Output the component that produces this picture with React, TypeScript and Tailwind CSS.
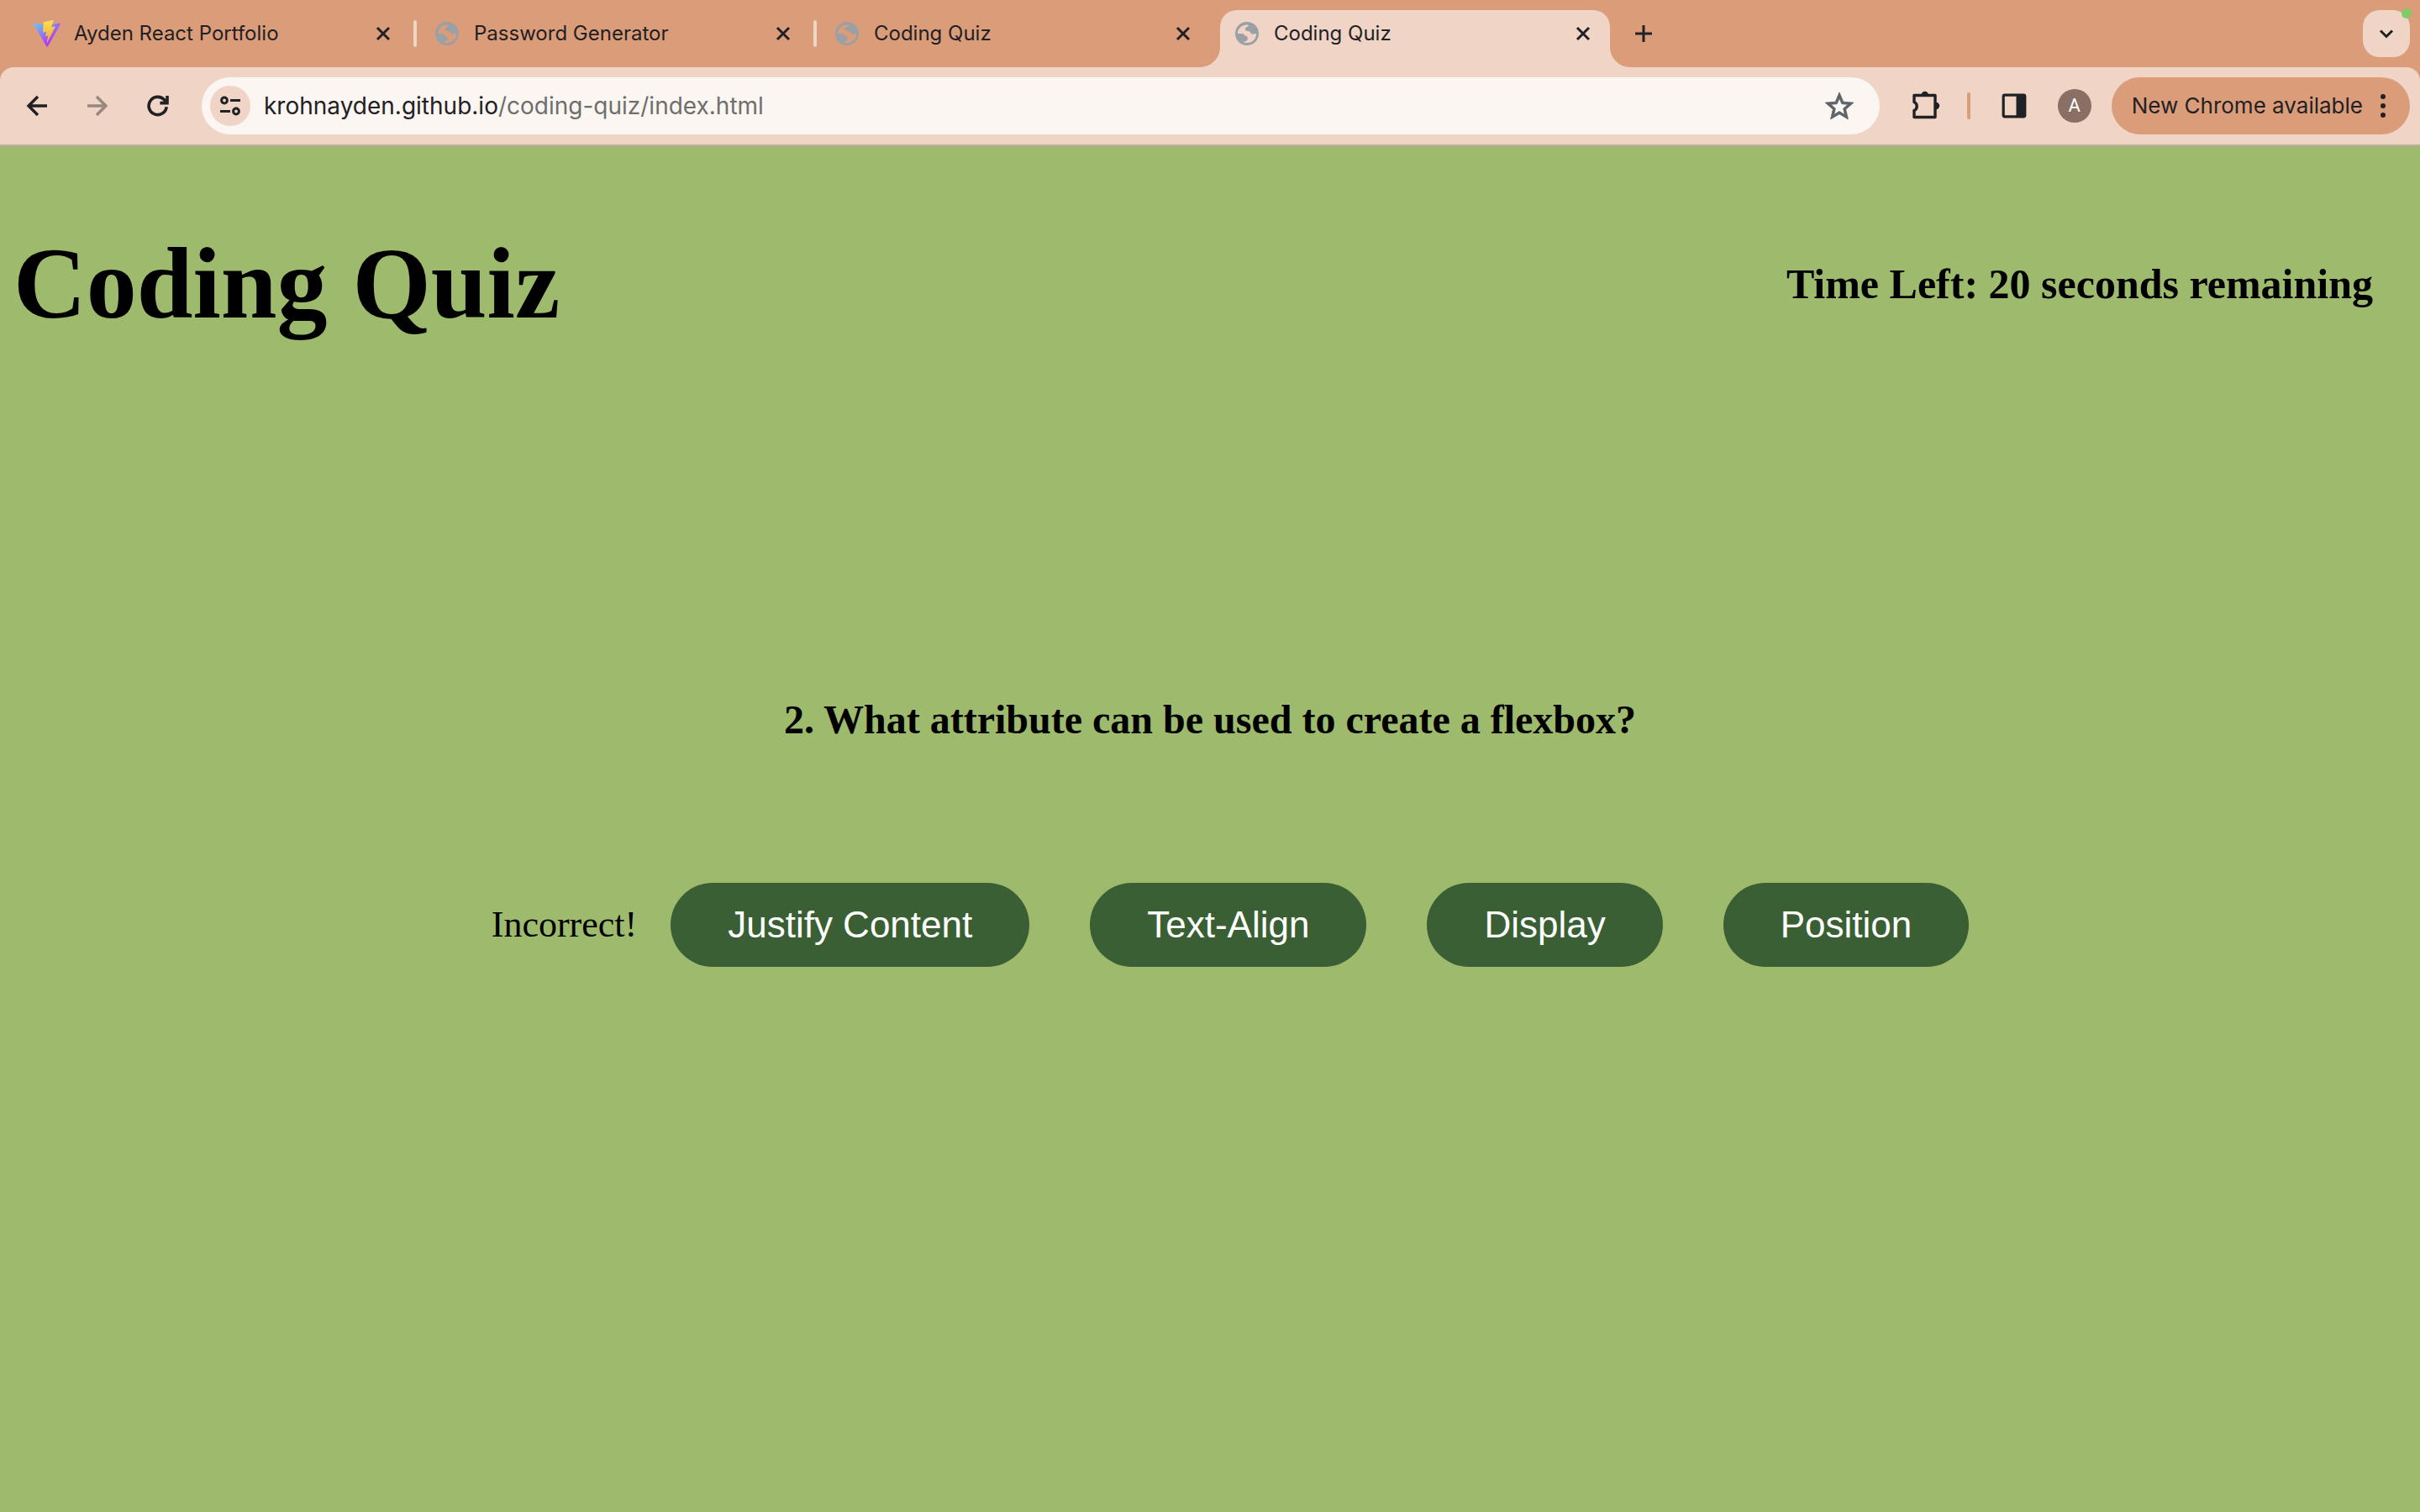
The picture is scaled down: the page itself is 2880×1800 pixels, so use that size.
import React from "react";

const ink = "#1f2124";

function ViteIcon() {
  return (
    <svg viewBox="0 0 256 257" className="size-8 shrink-0" aria-hidden="true">
      <defs>
        <linearGradient id="vite-shield" x1="-.828%" x2="57.636%" y1="7.652%" y2="78.411%">
          <stop offset="0%" stopColor="#5fc8fb" />
          <stop offset="100%" stopColor="#b03cf5" />
        </linearGradient>
        <linearGradient id="vite-bolt" x1="43.376%" x2="50.316%" y1="2.242%" y2="89.03%">
          <stop offset="0%" stopColor="#fbe784" />
          <stop offset="8.333%" stopColor="#f9db4e" />
          <stop offset="100%" stopColor="#f3ac3c" />
        </linearGradient>
      </defs>
      <path
        fill="url(#vite-shield)"
        d="M255.153 37.938L134.897 252.976c-2.483 4.44-8.862 4.466-11.382.048L.875 37.958c-2.746-4.814 1.371-10.646 6.827-9.67l120.385 21.517a6.537 6.537 0 0 0 2.322-.004l117.867-21.483c5.438-.991 9.574 4.796 6.877 9.62Z"
      />
      <path
        fill="url(#vite-bolt)"
        d="M185.432.063L96.44 17.501a3.268 3.268 0 0 0-2.634 3.014l-5.474 92.456a3.268 3.268 0 0 0 3.997 3.378l24.777-5.718c2.318-.535 4.413 1.507 3.936 3.838l-7.361 36.047c-.495 2.426 1.782 4.5 4.151 3.78l15.304-4.649c2.372-.72 4.652 1.36 4.15 3.788l-11.698 56.621c-.732 3.542 3.979 5.473 5.943 2.437l1.313-2.028l72.516-144.72c1.215-2.423-.88-5.186-3.54-4.672l-25.505 4.922c-2.396.462-4.435-1.77-3.759-4.114l16.646-57.705c.677-2.35-1.37-4.583-3.769-4.113Z"
      />
    </svg>
  );
}

function GlobeIcon() {
  return (
    <svg viewBox="0 0 32 32" className="size-8 shrink-0" fill="#9aa0a4" fillRule="evenodd" aria-hidden="true">
      <path d="M16 2a14 14 0 1 0 0 28a14 14 0 0 0 0-28ZM17.5 5.6C18.6 6.6 17.4 7.8 15.8 8.2C14.2 8.6 13.6 9.4 13.8 10.8C14 12.4 15.4 13 17 13C19 13 20 14 20.4 15.2C20.8 16.4 22 16.6 24 16.4L27.2 16C27.2 22.2 22.4 27 16 27C14.6 27 13.4 26.8 12.4 26.4V25.4C14.6 25.2 16.6 24.4 16.8 22.4C17 20.4 16.4 19.4 14.6 18.8C13.2 18.2 12.4 16.4 10.6 16H4.9C4.9 10.4 9.8 5.2 17.5 5.6Z" />
    </svg>
  );
}

function CloseIcon() {
  return (
    <svg viewBox="0 0 20 20" className="size-5" stroke={ink} strokeWidth="3" aria-hidden="true">
      <path d="M3 3 17 17M17 3 3 17" />
    </svg>
  );
}

type TabInfo = { title: string; icon: "vite" | "globe"; active?: boolean; separator?: boolean };

const tabs: TabInfo[] = [
  { title: "Ayden React Portfolio", icon: "vite", separator: true },
  { title: "Password Generator", icon: "globe", separator: true },
  { title: "Coding Quiz", icon: "globe" },
  { title: "Coding Quiz", icon: "globe", active: true },
];

function Flare({ side }: { side: "left" | "right" }) {
  return (
    <svg
      viewBox="0 0 24 24"
      fill="#f0d4c6"
      aria-hidden="true"
      className={side === "left" ? "absolute right-full bottom-0 size-6" : "absolute bottom-0 left-full size-6 -scale-x-100"}
    >
      <path d="M24 0V24H0A24 24 0 0 0 24 0Z" />
    </svg>
  );
}

function Tab({ tab }: { tab: TabInfo }) {
  return (
    <div className="flex w-[476px] items-start">
      <div
        className={
          tab.active
            ? "relative flex h-[68px] w-[464px] items-start rounded-t-[20px] bg-[#f0d4c6] pt-3 pr-[22px] pl-4"
            : "flex h-[68px] w-[464px] items-start pt-3 pr-[22px] pl-4"
        }
      >
        {tab.active && <Flare side="left" />}
        {tab.active && <Flare side="right" />}
        <button
          type="button"
          role="tab"
          aria-selected={!!tab.active}
          className="flex h-8 min-w-0 flex-1 items-center gap-4 text-left text-[24px] leading-8 whitespace-nowrap"
        >
          {tab.icon === "vite" ? <ViteIcon /> : <GlobeIcon />}
          <span>{tab.title}</span>
        </button>
        <button type="button" aria-label={"Close " + tab.title} className="flex h-8 items-center">
          <CloseIcon />
        </button>
      </div>
      {tab.separator && <span className="mt-3 ml-1 h-8 w-1 rounded-sm bg-[#f0d4c6]" />}
    </div>
  );
}

function BrowserChrome() {
  return (
    <header className="bg-[#db9c79] font-['Inter',sans-serif] text-[#1f2124]">
      <div className="flex h-20 items-start pt-3 pr-3 pl-6">
        <div role="tablist" aria-label="Open tabs" className="flex">
          {tabs.map((tab, i) => (
            <Tab key={i} tab={tab} />
          ))}
        </div>
        <button type="button" aria-label="New tab" className="flex size-14 items-center justify-center">
          <svg viewBox="0 0 20 20" className="size-5" stroke={ink} strokeWidth="3" aria-hidden="true">
            <path d="M10 0V20M0 10H20" />
          </svg>
        </button>
        <button
          type="button"
          aria-label="Search tabs"
          className="relative ml-auto flex size-14 items-center justify-center rounded-[20px] bg-[#f0d4c6]"
        >
          <svg viewBox="0 0 20 20" className="size-5" fill="none" stroke={ink} strokeWidth="3" aria-hidden="true">
            <path d="M3 6.5 10 13.5 17 6.5" />
          </svg>
          <span className="absolute -top-0.5 -right-0.5 size-3 rounded-full bg-[#80cb68]" />
        </button>
      </div>

      <div className="flex items-center rounded-t-2xl border-b-2 border-[#bfab9f] bg-[#f0d4c6] py-3 pr-3 pl-6">
        <nav aria-label="History" className="flex gap-8">
          <button type="button" aria-label="Back" className="flex size-10 items-center justify-center">
            <svg viewBox="0 0 26 26" className="size-[26px]" fill="none" stroke={ink} strokeWidth="3.4" aria-hidden="true">
              <path d="M25 13H3M14 2 3 13 14 24" />
            </svg>
          </button>
          <button type="button" aria-label="Forward" disabled className="flex size-10 items-center justify-center">
            <svg viewBox="0 0 26 26" className="size-[26px]" fill="none" stroke="#978880" strokeWidth="3.4" aria-hidden="true">
              <path d="M1 13H23M12 2 23 13 12 24" />
            </svg>
          </button>
          <button type="button" aria-label="Reload" className="flex size-10 items-center justify-center">
            <svg viewBox="0 0 26 26" className="size-[26px]" fill="none" stroke={ink} strokeWidth="3.6" aria-hidden="true">
              <path d="M23.2 14.2A10.6 10.6 0 1 1 20.6 5.9L22 8" />
              <path d="M24 1V9.6H15.4" />
            </svg>
          </button>
        </nav>

        <div className="ml-8 flex h-[68px] flex-1 items-center rounded-full bg-[#fbf6f2] pr-[30px] pl-2.5">
          <button
            type="button"
            aria-label="View site information"
            className="flex size-12 items-center justify-center rounded-full bg-[#f0d4c6]"
          >
            <svg viewBox="0 0 24 24" className="size-6" fill="none" stroke={ink} strokeWidth="3" aria-hidden="true">
              <circle cx="5" cy="5.5" r="3.4" />
              <path d="M12 5.5H24M0 18.5H12" />
              <circle cx="19" cy="18.5" r="3.4" />
            </svg>
          </button>
          <a
            href="#address"
            id="address"
            className="ml-4 flex-1 text-[28px] leading-8 whitespace-nowrap"
          >
            krohnayden.github.io<span className="text-[#6e6e6d]">/coding-quiz/index.html</span>
          </a>
          <button type="button" aria-label="Bookmark this tab" className="flex size-9 items-center justify-center">
            <svg viewBox="2 2 20 19" className="h-8 w-[34px]" fill="#5f6366" stroke="#5f6366" strokeWidth="0.5" aria-hidden="true">
              <path d="M22 9.24l-7.19-.62L12 2 9.19 8.63 2 9.24l5.46 4.73L5.82 21 12 17.27 18.18 21l-1.63-7.03L22 9.24zM12 15.4l-3.76 2.27 1-4.28-3.32-2.88 4.38-.38L12 6.1l1.71 4.04 4.38.38-3.32 2.88 1 4.28L12 15.4z" />
            </svg>
          </button>
        </div>

        <button type="button" aria-label="Extensions" className="ml-9 flex size-9 items-center justify-center">
          <svg viewBox="0 0 36 36" className="size-9" aria-hidden="true">
            <path
              d="M5 5.5H30V31.5H5V23.5A5.5 5.5 0 0 0 5 13.5Z"
              fill="none"
              stroke={ink}
              strokeWidth="3.4"
              strokeLinejoin="round"
            />
            <path d="M13.6 5A4.2 4.2 0 0 1 22 5ZM31 13.8A4.2 4.2 0 0 1 31 22.2Z" fill={ink} />
          </svg>
        </button>
        <span className="ml-8 h-8 w-1 rounded-sm bg-[#db9c79]" />
        <button type="button" aria-label="Side panel" className="ml-9 flex size-8 items-center justify-center">
          <svg viewBox="0 0 30 30" className="size-[30px]" aria-hidden="true">
            <rect x="2.2" y="2.2" width="25.6" height="25.6" rx="1.5" fill="none" stroke={ink} strokeWidth="3.2" />
            <path d="M17.5 2H28V28H17.5Z" fill={ink} />
          </svg>
        </button>
        <button
          type="button"
          aria-label="Profile"
          className="ml-9 flex size-10 items-center justify-center rounded-full bg-[#8a6f64] font-['Roboto',sans-serif] text-[22px] leading-6 text-white"
        >
          A
        </button>
        <button
          type="button"
          className="ml-6 flex h-[68px] items-center gap-5 rounded-full bg-[#db9c79] pr-7 pl-6 text-[26px] leading-8 whitespace-nowrap"
        >
          New Chrome available
          <svg viewBox="0 0 8 28" className="h-7 w-2" fill={ink} aria-hidden="true">
            <circle cx="4" cy="3" r="3" />
            <circle cx="4" cy="14" r="3" />
            <circle cx="4" cy="25" r="3" />
          </svg>
        </button>
      </div>
    </header>
  );
}

const answers = ["Justify Content", "Text-Align", "Display", "Position"];

export default function App() {
  return (
    <div className="flex min-h-screen flex-col bg-[#9eba6d]">
      <BrowserChrome />
      <main className="flex-1 font-['Liberation_Serif',serif] text-black">
        <div className="flex items-center justify-between pt-[97px] pr-14 pl-4">
          <h1 className="text-[120px] leading-[134px] font-bold">Coding Quiz</h1>
          <p className="text-[50px] leading-[58px] font-bold">Time Left: 20 seconds remaining</p>
        </div>
        <h2 className="mt-[424px] text-center text-[48px] leading-[56px] font-bold">
          2. What attribute can be used to create a flexbox?
        </h2>
        <div className="mt-[166px] flex items-center justify-center pl-12">
          <p className="mr-10 text-[44px] leading-[50px]">Incorrect!</p>
          <div className="flex gap-[72px]">
            {answers.map((answer) => (
              <button
                key={answer}
                type="button"
                className="h-[100px] rounded-full bg-[#3a5f34] px-[68px] font-['Liberation_Sans',sans-serif] text-[44px] leading-[50px] text-white"
              >
                {answer}
              </button>
            ))}
          </div>
        </div>
      </main>
    </div>
  );
}
